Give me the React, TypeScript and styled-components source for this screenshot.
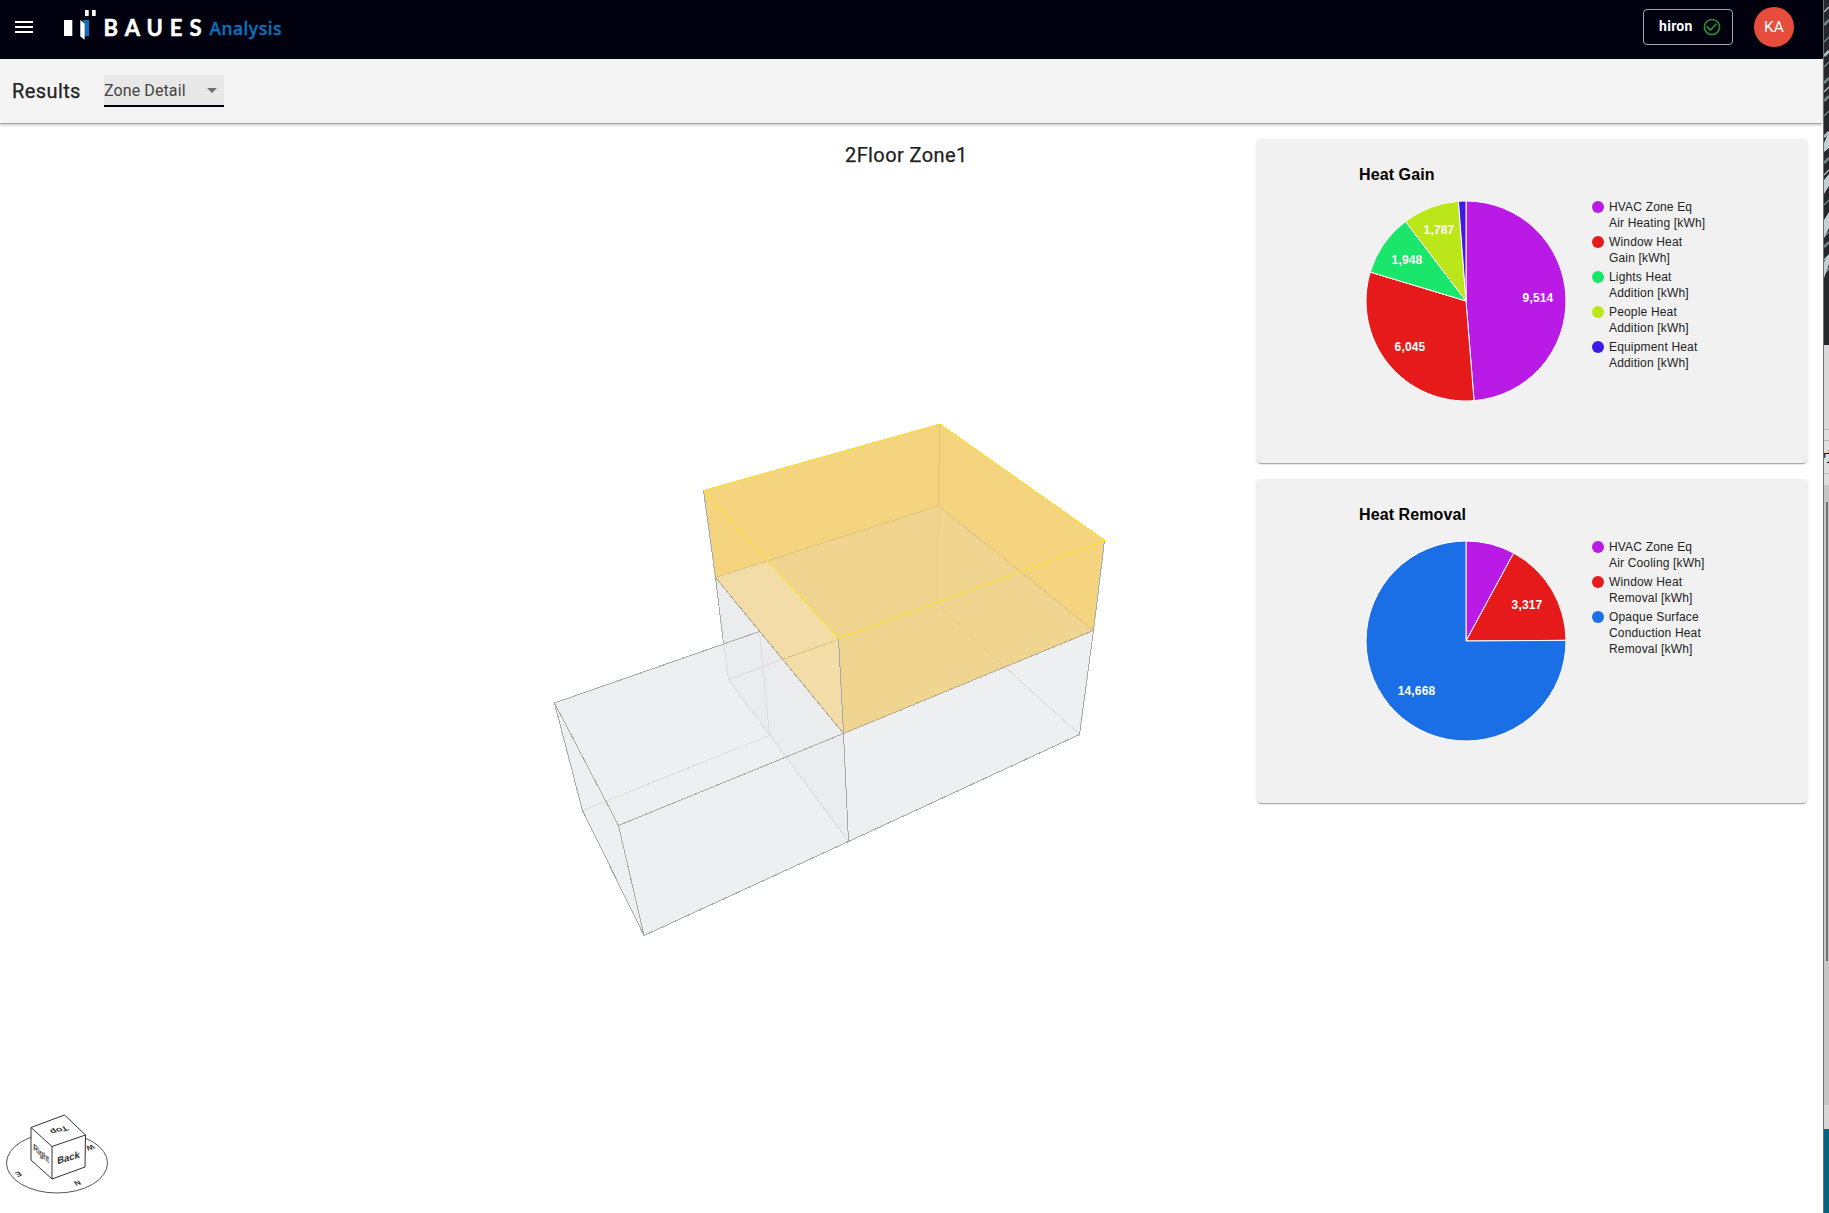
import React from "react";
import styled, { createGlobalStyle } from "styled-components";

const Global = createGlobalStyle`
  * { box-sizing: border-box; }
  html, body { margin: 0; height: 100%; background: #fff; overflow: hidden; }
  body { font-family: Roboto, "Liberation Sans", sans-serif; }
`;

const Desktop = styled.div`
  display: flex;
  width: 1829px;
  height: 1213px;
`;

const AppWindow = styled.div`
  width: 1823px;
  display: flex;
  flex-direction: column;
  background: #fff;
`;

const TopBar = styled.header`
  height: 59px;
  flex: none;
  display: flex;
  align-items: flex-start;
  background: #01000f;
  padding: 7px 29px 0 12px;
`;

const MenuButton = styled.button`
  width: 24px;
  height: 24px;
  margin-top: 8px;
  padding: 0;
  border: 0;
  background: none;
  display: block;
`;

const Brand = styled.div`
  margin: -7px 0 0 22px;
  height: 50px;
`;

const UserArea = styled.div`
  margin-left: auto;
  display: flex;
  align-items: center;
  gap: 21px;
`;

const ProjectButton = styled.button`
  width: 90px;
  height: 36px;
  margin-top: 0;
  padding: 0 0 0 15px;
  display: flex;
  align-items: center;
  gap: 9px;
  border: 1px solid #a5a5aa;
  border-radius: 4px;
  background: transparent;
  color: #fff;
  font: 700 14px/20px Roboto, sans-serif;
  letter-spacing: 0.3px;
  span { margin-top: -2px; }
`;

const Avatar = styled.div`
  width: 40px;
  height: 40px;
  border-radius: 50%;
  background: #e74c3c;
  color: #fff;
  display: flex;
  align-items: center;
  justify-content: center;
  font-size: 15.5px;
`;

const ToolBar = styled.div`
  height: 65px;
  flex: none;
  margin-right: 1px;
  display: flex;
  align-items: flex-start;
  padding: 16px 12px 0;
  gap: 24px;
  background: #f4f4f4;
  border-bottom: 1px solid #a6a6a6;
  box-shadow: 0 1px 3px rgba(0, 0, 0, 0.25);
`;

const ToolTitle = styled.h1`
  margin: 0;
  width: 68px;
  font: 400 20px/32px Roboto, sans-serif;
  letter-spacing: 0.4px;
  -webkit-text-stroke: 0.25px #212121;
  color: #212121;
  white-space: nowrap;
`;

const Select = styled.div`
  width: 120px;
  height: 32px;
  display: flex;
  align-items: center;
  justify-content: space-between;
  background: #e8e8e8;
  border-bottom: 2px solid #01000f;
  color: #444;
  font-size: 16px;
  letter-spacing: 0.1px;
`;

const Content = styled.main`
  flex: 1;
  display: flex;
  min-height: 0;
`;

const Viewer = styled.section`
  position: relative;
  flex: 1;
  padding-top: 15px;
`;

const ZoneTitle = styled.h2`
  margin: 0 0 0 845px;
  font: 400 20px/32px Roboto, sans-serif;
  letter-spacing: 0.4px;
  -webkit-text-stroke: 0.25px #212121;
  color: #212121;
`;

const Model = styled.svg`
  position: absolute;
  left: 550px;
  top: 290px;
`;

const Compass = styled.svg`
  position: absolute;
  left: 0;
  bottom: 0;
`;

const Charts = styled.aside`
  width: 567px;
  padding: 15px 16px 0 1px;
  display: flex;
  flex-direction: column;
  gap: 16px;
`;

const Card = styled.article`
  height: 324px;
  display: flex;
  padding-left: 102px;
  border-radius: 4px;
  background: #f1f1f1;
  box-shadow: 0 2px 1px -1px rgba(0, 0, 0, 0.2), 0 1px 1px rgba(0, 0, 0, 0.14),
    0 1px 3px rgba(0, 0, 0, 0.12);
  font-family: "Liberation Sans", Arial, sans-serif;
`;

const ChartColumn = styled.div`
  width: 233px;
  padding-top: 27px;
`;

const ChartTitle = styled.h3`
  margin: 0;
  font-size: 16px;
  line-height: 18px;
  font-weight: 700;
  letter-spacing: 0.1px;
  color: #000;
`;

const PieSvg = styled.svg`
  display: block;
  margin: 16px 0 0 6px;
`;

const Legend = styled.ul`
  list-style: none;
  margin: 0;
  padding: 60px 0 0;
  display: flex;
  flex-direction: column;
  gap: 3px;
`;

const LegendItem = styled.li`
  display: flex;
  gap: 5px;
  color: #222;
  font-size: 12px;
  line-height: 16px;
  letter-spacing: 0.17px;
  white-space: pre-line;
`;

const Dot = styled.i<{ $color: string }>`
  width: 12px;
  height: 12px;
  margin-top: 2px;
  flex: none;
  border-radius: 50%;
  background: ${(p) => p.$color};
`;

const Backdrop = styled.div`
  width: 6px;
  display: flex;
  flex-direction: column;
  overflow: hidden;
  border-left: 1px solid #6d7070;
  background: #d9d9d9;
`;

const Texture = styled.svg`
  flex: none;
  display: block;
`;

const Band = styled.div<{ $h: number; $bg: string; $line?: boolean }>`
  height: ${(p) => p.$h}px;
  flex: none;
  overflow: hidden;
  background: ${(p) => p.$bg};
  border-bottom: ${(p) => (p.$line ? "1px solid #b8b8b8" : "0")};
  font: 15px/30px "Noto Sans CJK JP", sans-serif;
  text-indent: -2px;
  color: #111;
`;

const ScrollThumb = styled.div`
  width: 2px;
  height: 459px;
  margin: 17px 0 0 2px;
  background: #707070;
`;

type Slice = { label: string; value: number; color: string; text?: string; tx?: number; ty?: number };

const gain: Slice[] = [
  { label: "HVAC Zone Eq\nAir Heating [kWh]", value: 9514, color: "#b91ae6", text: "9,514", tx: 173, ty: 102 },
  { label: "Window Heat\nGain [kWh]", value: 6045, color: "#e61a1a", text: "6,045", tx: 45, ty: 151 },
  { label: "Lights Heat\nAddition [kWh]", value: 1948, color: "#1ae66b", text: "1,948", tx: 42, ty: 64 },
  { label: "People Heat\nAddition [kWh]", value: 1787, color: "#bbe61a", text: "1,787", tx: 74, ty: 34 },
  { label: "Equipment Heat\nAddition [kWh]", value: 235, color: "#3f1ae6" },
];

const removal: Slice[] = [
  { label: "HVAC Zone Eq\nAir Cooling [kWh]", value: 1545, color: "#b91ae6" },
  { label: "Window Heat\nRemoval [kWh]", value: 3317, color: "#e61a1a", text: "3,317", tx: 162, ty: 69 },
  { label: "Opaque Surface\nConduction Heat\nRemoval [kWh]", value: 14668, color: "#1a6ee6", text: "14,668", tx: 51.5, ty: 155 },
];

function Pie({ data }: { data: Slice[] }) {
  const total = data.reduce((s, d) => s + d.value, 0);
  const c = 101;
  const r = 100;
  let acc = 0;
  const at = (v: number) => {
    const a = (v / total) * Math.PI * 2;
    return `${c + r * Math.sin(a)} ${c - r * Math.cos(a)}`;
  };
  return (
    <PieSvg width="203" height="202" viewBox="0 0 203 202">
      {data.map((d) => {
        const start = at(acc);
        acc += d.value;
        return (
          <path
            key={d.label}
            d={`M${c} ${c}L${start}A${r} ${r} 0 ${d.value / total > 0.5 ? 1 : 0} 1 ${at(acc)}Z`}
            fill={d.color}
            stroke="#fff"
            strokeWidth="1"
          />
        );
      })}
      {data.map((d) =>
        d.text ? (
          <text key={d.text} x={d.tx} y={d.ty} textAnchor="middle" fontSize="12" fontWeight="700" letterSpacing=".15" fill="#fff">
            {d.text}
          </text>
        ) : null
      )}
    </PieSvg>
  );
}

function ChartCard({ title, data }: { title: string; data: Slice[] }) {
  return (
    <Card>
      <ChartColumn>
        <ChartTitle>{title}</ChartTitle>
        <Pie data={data} />
      </ChartColumn>
      <Legend>
        {data.map((d) => (
          <LegendItem key={d.label}>
            <Dot $color={d.color} />
            {d.label}
          </LegendItem>
        ))}
      </Legend>
    </Card>
  );
}

function Logo() {
  return (
    <svg width="240" height="50" viewBox="58 0 240 50">
      <path d="M64 20h8.300v16h-8.300zM85 10h3.700v6H85zM92 10h3.700v6H92z" fill="#fff" />
      <path d="M82 20h7v16h-4.500V23z" fill="#0d72bd" />
      <path d="M80.300 20l4.400 3.500v16.300l-4.400-3.300z" fill="#fff" />
      <text x="103.500" y="35.500" fontFamily="Lato" fontWeight="700" fontSize="22" fill="#fff" stroke="#fff" strokeWidth=".5" textLength="98" lengthAdjust="spacing">
        BAUES
      </text>
      <text x="209.500" y="34.500" fontFamily="'Noto Sans'" fontWeight="500" fontSize="17.500" fill="#0d72bd" stroke="#0d72bd" strokeWidth=".4" textLength="72" lengthAdjust="spacing">
        Analysis
      </text>
    </svg>
  );
}

function ZoneModel() {
  return (
    <Model width="560" height="530" viewBox="549.500 413.500 560 530" shapeRendering="crispEdges" fill="none">
      <path d="M715 577L723 643L554 702.500L582 810L643.500 935L848 841L1079 734L1093 630L843 733Z" fill="#eeeff1" />
      <path d="M715 577L843 733L848 841L728 679Z" fill="#ebecee" />
      <path d="M703 490L939.500 423.500L1104.500 540L1093 630L843 733L715 577Z" fill="#f5d480" />
      <path d="M715 577L938 505.500L1093 630L843 733Z" fill="#f0d590" />
      <path d="M715 577L768 560L838 638L843 733Z" fill="#f2dda8" />
      <g stroke="#dadbdd">
        <path d="M723 643L728 679L848 841M728 679L782 659M759 631L769 735L582 810M1005 667L1079 734" />
      </g>
      <g stroke="#dfc27c">
        <path d="M715 577L938 505.500L1093 630M939 424L938 506M782 659L838 639" />
      </g>
      <path d="M938 506L936 603L1005 667" stroke="#e8cf8f" />
      <g stroke="#a8a9ab">
        <path d="M703 490L715 577L723 643M759 631L554 702.500L582 810L643.500 935L618 825L554 702.500M618 825L843 733L848 841M643.500 935L848 841L1079 734L1093 630L1104 540M838 638L843 733" />
      </g>
      <path d="M715 577L843 733L1093 630" stroke="#b6ab91" />
      <path d="M703 490L939.500 423.500L1104.500 540L838 638Z" stroke="#fae02c" />
    </Model>
  );
}

function ViewCube() {
  return (
    <Compass width="130" height="113" viewBox="0 0 130 113" fontFamily="'DejaVu Sans'" fill="#333">
      <ellipse cx="57" cy="63" rx="50.500" ry="30" fill="#fff" stroke="#555" />
      <path d="M31 27.500L64.500 15L85.500 35L85 67L52 79L31 60Z" fill="#fff" stroke="#333" />
      <path d="M31 27.500L52 46.500L85.500 35M52 46.500V79" fill="none" stroke="#333" />
      <g textAnchor="middle" fontFamily="'Liberation Sans'" fontWeight="700">
        <text transform="matrix(.95 -.27 0 1 68.500 61)" fontSize="10">Back</text>
        <text transform="matrix(.7 .6 0 1 41 56.500)" fontSize="9.500" fontWeight="400" stroke="#333" strokeWidth=".2">Right</text>
        <text transform="matrix(-.96 .25 -.5 -.62 57.500 28)" fontSize="10">Top</text>
        <text transform="matrix(-.9 .3 -.5 -.7 76 81)" fontSize="8.500">N</text>
        <text transform="matrix(-.9 .3 -.5 -.7 89 45.500)" fontSize="8.500">W</text>
        <text transform="matrix(-.9 .3 -.5 -.7 17 72)" fontSize="8.500">E</text>
      </g>
    </Compass>
  );
}

const streaks = [8, 21, 38, 52, 63, 79, 88, 97, 112, 133, 147, 159, 171, 184, 201, 220, 233, 243, 256, 269];

export default function App() {
  return (
    <Desktop>
      <Global />
      <AppWindow>
        <TopBar>
          <MenuButton aria-label="menu">
            <svg width="24" height="24" viewBox="0 0 24 24" fill="#fff">
              <path d="M3 18h18v-2H3v2zm0-5h18v-2H3v2zm0-7v2h18V6H3z" />
            </svg>
          </MenuButton>
          <Brand>
            <Logo />
          </Brand>
          <UserArea>
            <ProjectButton>
              <span>hiron</span>
              <svg width="20" height="20" viewBox="0 0 24 24" fill="#2e8b35">
                <path d="M16.590 7.580L10 14.170l-3.590-3.580L5 12l5 5 8-8zM12 2C6.480 2 2 6.480 2 12s4.480 10 10 10 10-4.480 10-10S17.520 2 12 2zm0 18c-4.420 0-8-3.580-8-8s3.580-8 8-8 8 3.580 8 8-3.580 8-8 8z" />
              </svg>
            </ProjectButton>
            <Avatar>KA</Avatar>
          </UserArea>
        </TopBar>
        <ToolBar>
          <ToolTitle>Results</ToolTitle>
          <Select>
            Zone Detail
            <svg width="24" height="24" viewBox="0 0 24 24" fill="#6f6f6f">
              <path d="M7 10l5 5 5-5z" />
            </svg>
          </Select>
        </ToolBar>
        <Content>
          <Viewer>
            <ZoneTitle>2Floor Zone1</ZoneTitle>
            <ZoneModel />
            <ViewCube />
          </Viewer>
          <Charts>
            <ChartCard title="Heat Gain" data={gain} />
            <ChartCard title="Heat Removal" data={removal} />
          </Charts>
        </Content>
      </AppWindow>
      <Backdrop>
        <Texture width="5" height="345" viewBox="0 0 5 345">
          <rect width="5" height="345" fill="#24282c" />
          {streaks.map((y, i) => (
            <path key={y} d={`M0 ${y + 4}L5 ${y - 1}`} stroke={i % 3 ? "#6f8086" : "#aebbbf"} strokeWidth={i % 2 ? 3 : 1.5} />
          ))}
          <path d="M0 143L5 132V148L0 152ZM0 180L5 174V186L0 194ZM0 220L5 212V228L0 238ZM0 262L5 254V264L0 278Z" fill="#c2d0d4" />
        </Texture>
        <Band $h={85} $bg="#d9d9d9" $line />
        <Band $h={11} $bg="#dedede" $line />
        <Band $h={33} $bg="#dedede" $line>ウ</Band>
        <Band $h={11} $bg="#dedede" />
        <Band $h={620} $bg="#c6c6c6">
          <ScrollThumb />
        </Band>
        <Band $h={24} $bg="#d6d6d6" />
        <Band $h={84} $bg="#006680" />
      </Backdrop>
    </Desktop>
  );
}
